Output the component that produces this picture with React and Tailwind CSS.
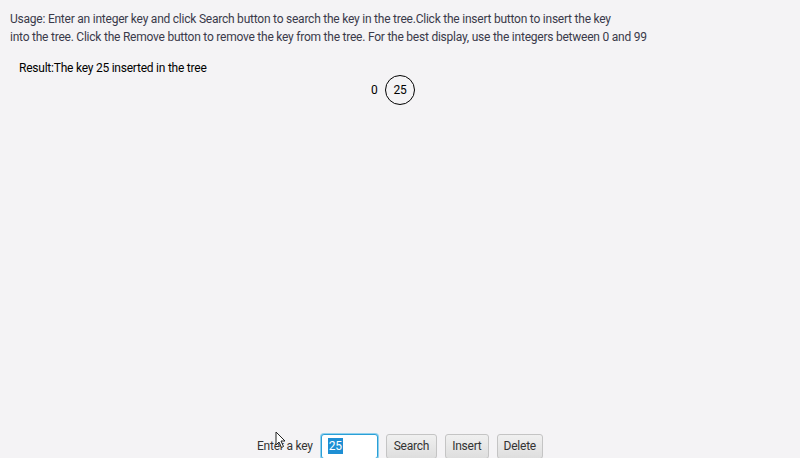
import React from "react";

export default function App() {
  return (
    <div
      className="w-[800px] h-[458px] bg-[#f4f3f5] flex flex-col overflow-hidden relative text-[#333333] tracking-[-0.23px]"
      style={{ fontFamily: 'Roboto, "Open Sans", sans-serif' }}
    >
      <div className="pl-[10px] pt-[10px] text-[12px] leading-[18px] text-[#3a3a4a]">
        <div>Usage: Enter an integer key and click Search button to search the key in the tree.Click the insert button to insert the key</div>
        <div>into the tree. Click the Remove button to remove the key from the tree. For the best display, use the integers between 0 and 99</div>
      </div>
      <div className="pl-[19px] mt-[13px] text-[12px] leading-[18px] text-black">
        Result:The key 25 inserted in the tree
      </div>
      <div className="relative flex-1">
        <div className="absolute left-[371px] top-[4px] text-[12px] leading-[18px] text-black">0</div>
        <div className="absolute left-[385px] top-[-2px] w-[30px] h-[30px] rounded-full border border-black flex items-center justify-center text-[12px] text-black">
          25
        </div>
      </div>
      <div className="flex items-center justify-center gap-[8px] h-[26px] mb-[-1px] text-[12px]">
        <span className="text-[#333]">Enter a key</span>
        <div className="w-[57px] h-[25px] border border-[#2a9fd6] rounded-[3px] bg-white flex items-center pl-[6px] shadow-[0_0_0_1px_#8fd0ee]">
          <span className="bg-[#1e8fd4] text-white leading-[16px] px-[1px]">25</span>
        </div>
        <button className="h-[25px] px-[7px] border border-[#c4c4c4] rounded-[3px] bg-gradient-to-b from-[#f0f0f0] to-[#dedede] text-[#333]">Search</button>
        <button className="h-[25px] px-[6px] border border-[#c4c4c4] rounded-[3px] bg-gradient-to-b from-[#f0f0f0] to-[#dedede] text-[#333]">Insert</button>
        <button className="h-[25px] px-[6px] border border-[#c4c4c4] rounded-[3px] bg-gradient-to-b from-[#f0f0f0] to-[#dedede] text-[#333]">Delete</button>
      </div>
      <svg className="absolute left-[275px] top-[431px]" width="12" height="18" viewBox="0 0 12 18">
        <path d="M1 1 L1 14 L4 11 L6.5 16.5 L8.5 15.5 L6 10 L10 10 Z" fill="#ffffff" stroke="#222" strokeWidth="1" />
      </svg>
    </div>
  );
}
